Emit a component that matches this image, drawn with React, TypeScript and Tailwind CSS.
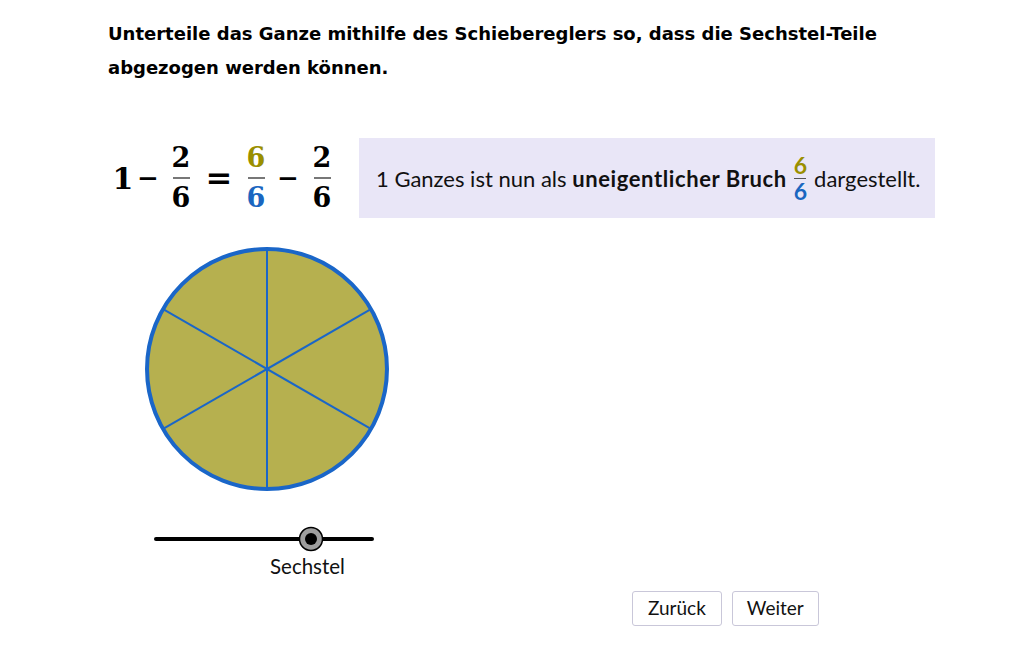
import React from "react";

const sans = { fontFamily: "Lato, 'Open Sans', sans-serif" };

function Frac({ n, d, w, nc = "text-black", dc = "text-black" }: { n: string; d: string; w: string; nc?: string; dc?: string }) {
  return (
    <span className={`inline-flex flex-col items-center leading-none ${w}`}>
      <span className={`${nc} text-[27px] leading-[30px]`}>{n}</span>
      <span className="block w-[17px] h-[1.5px] bg-[#777] my-[4px]" />
      <span className={`${dc} text-[27px] leading-[30px]`}>{d}</span>
    </span>
  );
}

function SmallFrac({ n, d }: { n: string; d: string }) {
  return (
    <span className="inline-flex flex-col items-center leading-none mx-[7px] align-middle">
      <span className="text-[#9a8f00] font-bold text-[23px] leading-[21px]">{n}</span>
      <span className="block w-[12px] h-[1px] bg-[#555] my-[2px]" />
      <span className="text-[#1a66c0] font-bold text-[23px] leading-[21px]">{d}</span>
    </span>
  );
}

export default function App() {
  const cx = 122, cy = 122, r = 119;
  const lines = [0, 60, 120].map((a) => {
    const rad = (a * Math.PI) / 180;
    const dx = Math.sin(rad) * r, dy = -Math.cos(rad) * r;
    return { x1: cx + dx, y1: cy + dy, x2: cx - dx, y2: cy - dy };
  });
  return (
    <div className="w-[1032px] h-[645px] bg-white relative overflow-hidden" style={sans}>
      <div className="pl-[108px] pt-[17px] pr-[40px]">
        <h1
          className="text-[18px] font-bold leading-[34px] text-black whitespace-nowrap"
          style={{ fontFamily: "'DejaVu Sans', sans-serif" }}
        >
          Unterteile das Ganze mithilfe des Schiebereglers so, dass die Sechstel-Teile
          <br />
          abgezogen werden können.
        </h1>
        <div className="flex items-center mt-[53px]">
          <div className="flex items-center w-[251px] font-bold" style={{ fontFamily: "'DejaVu Serif', serif" }}>
            <span className="text-[30px] w-[30px] flex justify-center">1</span>
            <span className="text-[26px] w-[20px] flex justify-center">−</span>
            <Frac n="2" d="6" w="w-[46px]" />
            <span className="text-[32px] w-[30px] flex justify-center">=</span>
            <Frac n="6" d="6" w="w-[44px]" nc="text-[#9a8f00]" dc="text-[#1a66c0]" />
            <span className="text-[26px] w-[20px] flex justify-center">−</span>
            <Frac n="2" d="6" w="w-[48px]" />
          </div>
          <div className="w-[576px] h-[80px] bg-[#e9e6f7] flex items-center pl-[17px] text-[22px] text-[#111]">
            <span>1 Ganzes ist nun als&nbsp;</span>
            <span className="font-bold tracking-[0.6px]">uneigentlicher Bruch</span>
            <SmallFrac n="6" d="6" />
            <span>dargestellt.</span>
          </div>
        </div>
        <div className="ml-[36px] mt-[28px]">
          <svg width="246" height="246" viewBox="0 0 244 244" className="block">
            <circle cx={cx} cy={cy} r={r} fill="#b6b04f" stroke="#1a66c8" strokeWidth="4" />
            {lines.map((l, i) => (
              <line key={i} {...l} stroke="#1a66c8" strokeWidth="2" />
            ))}
          </svg>
        </div>
        <div className="flex items-end">
          <div className="ml-[45px] mt-[47px] relative w-[222px] h-[60px]">
            <svg width="222" height="30" className="block absolute left-0 top-[-15px]">
              <line x1="3" y1="15" x2="219" y2="15" stroke="#000" strokeWidth="4" strokeLinecap="round" />
              <circle cx="158" cy="15" r="11.5" fill="#9e9e9e" stroke="#000" strokeWidth="1.5" />
              <circle cx="158" cy="15" r="6" fill="#000" />
            </svg>
            <div className="absolute left-[117px] top-[12px] text-[20.5px] text-[#111]">Sechstel</div>
          </div>
          <div className="flex gap-[10px] ml-[257px] mb-[-27px]">
            <button className="h-[35px] px-[15px] border border-[#c9c7d9] rounded-[3px] bg-white text-[19px] text-[#111]">Zurück</button>
            <button className="h-[35px] px-[14px] border border-[#c9c7d9] rounded-[3px] bg-white text-[19px] text-[#111]">Weiter</button>
          </div>
        </div>
      </div>
    </div>
  );
}
